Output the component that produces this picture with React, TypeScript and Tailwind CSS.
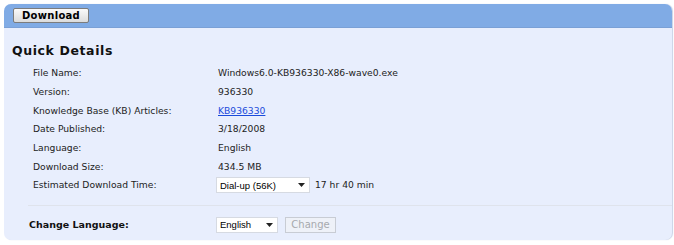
const details: { label: string; value: string; link?: boolean }[] = [
  { label: "File Name:", value: "Windows6.0-KB936330-X86-wave0.exe" },
  { label: "Version:", value: "936330" },
  { label: "Knowledge Base (KB) Articles:", value: "KB936330", link: true },
  { label: "Date Published:", value: "3/18/2008" },
  { label: "Language:", value: "English" },
  { label: "Download Size:", value: "434.5 MB" },
];

function FakeSelect({ text, width }: { text: string; width: string }) {
  return (
    <div
      className={`flex items-center justify-between h-[16px] bg-white border border-[#d6dae2] pl-[3px] pr-[4px] ${width}`}
      style={{ fontFamily: '"Liberation Sans", Arial, sans-serif' }}
    >
      <span className="text-[9.5px] text-black leading-none">{text}</span>
      <svg width="7" height="4" viewBox="0 0 7 4">
        <path d="M0 0h7L3.5 4z" fill="#222" />
      </svg>
    </div>
  );
}

export default function App() {
  return (
    <div
      className="w-[674px] h-[245px] bg-white pt-[4px] pl-[4px] pr-[2px]"
      style={{ fontFamily: '"DejaVu Sans", Verdana, sans-serif' }}
    >
      <div className="rounded-[7px] bg-[#e8eefd] shadow-[1px_0_1px_#c9d3e6] overflow-hidden">
        <div className="h-[24px] bg-[#80abe5] border-b border-[#7aa0d6] flex items-center pl-[9px]">
          <button className="h-[15px] w-[76px] rounded-[2px] border border-[#7c7c7c] bg-gradient-to-b from-[#fafafa] to-[#dcdcdc] text-[10px] font-bold text-black leading-none tracking-[0.3px]">
            Download
          </button>
        </div>
        <div className="pt-[15px] pb-[6px]">
          <div className="pl-[8px] text-[12.5px] font-bold text-[#111] h-[16px] leading-[16px] tracking-[0.6px]">
            Quick Details
          </div>
          <div className="pt-[5px] pl-[29px] text-[9.2px] text-[#222]">
            {details.map((d) => (
              <div key={d.label} className="flex items-center h-[18.67px]">
                <span className="w-[185px]">{d.label}</span>
                {d.link ? (
                  <span className="text-[#1a4bdb] underline">{d.value}</span>
                ) : (
                  <span>{d.value}</span>
                )}
              </div>
            ))}
            <div className="flex items-center h-[18.67px]">
              <span className="w-[183px]">Estimated Download Time:</span>
              <FakeSelect text="Dial-up (56K)" width="w-[94px]" />
              <span className="ml-[5px]">17 hr 40 min</span>
            </div>
          </div>
          <div className="ml-[24px] mt-[10px] border-t border-[#dfe3ec]" />
          <div className="flex items-center pl-[25px] pt-[11px] h-[28px]">
            <span className="w-[187px] text-[9.5px] font-bold text-[#111]">Change Language:</span>
            <FakeSelect text="English" width="w-[62px]" />
            <button className="ml-[7px] h-[16px] w-[51px] border border-[#c8ccd4] bg-[#eef1f8] text-[10px] text-[#a6a9ae] leading-none">
              Change
            </button>
          </div>
        </div>
      </div>
    </div>
  );
}
